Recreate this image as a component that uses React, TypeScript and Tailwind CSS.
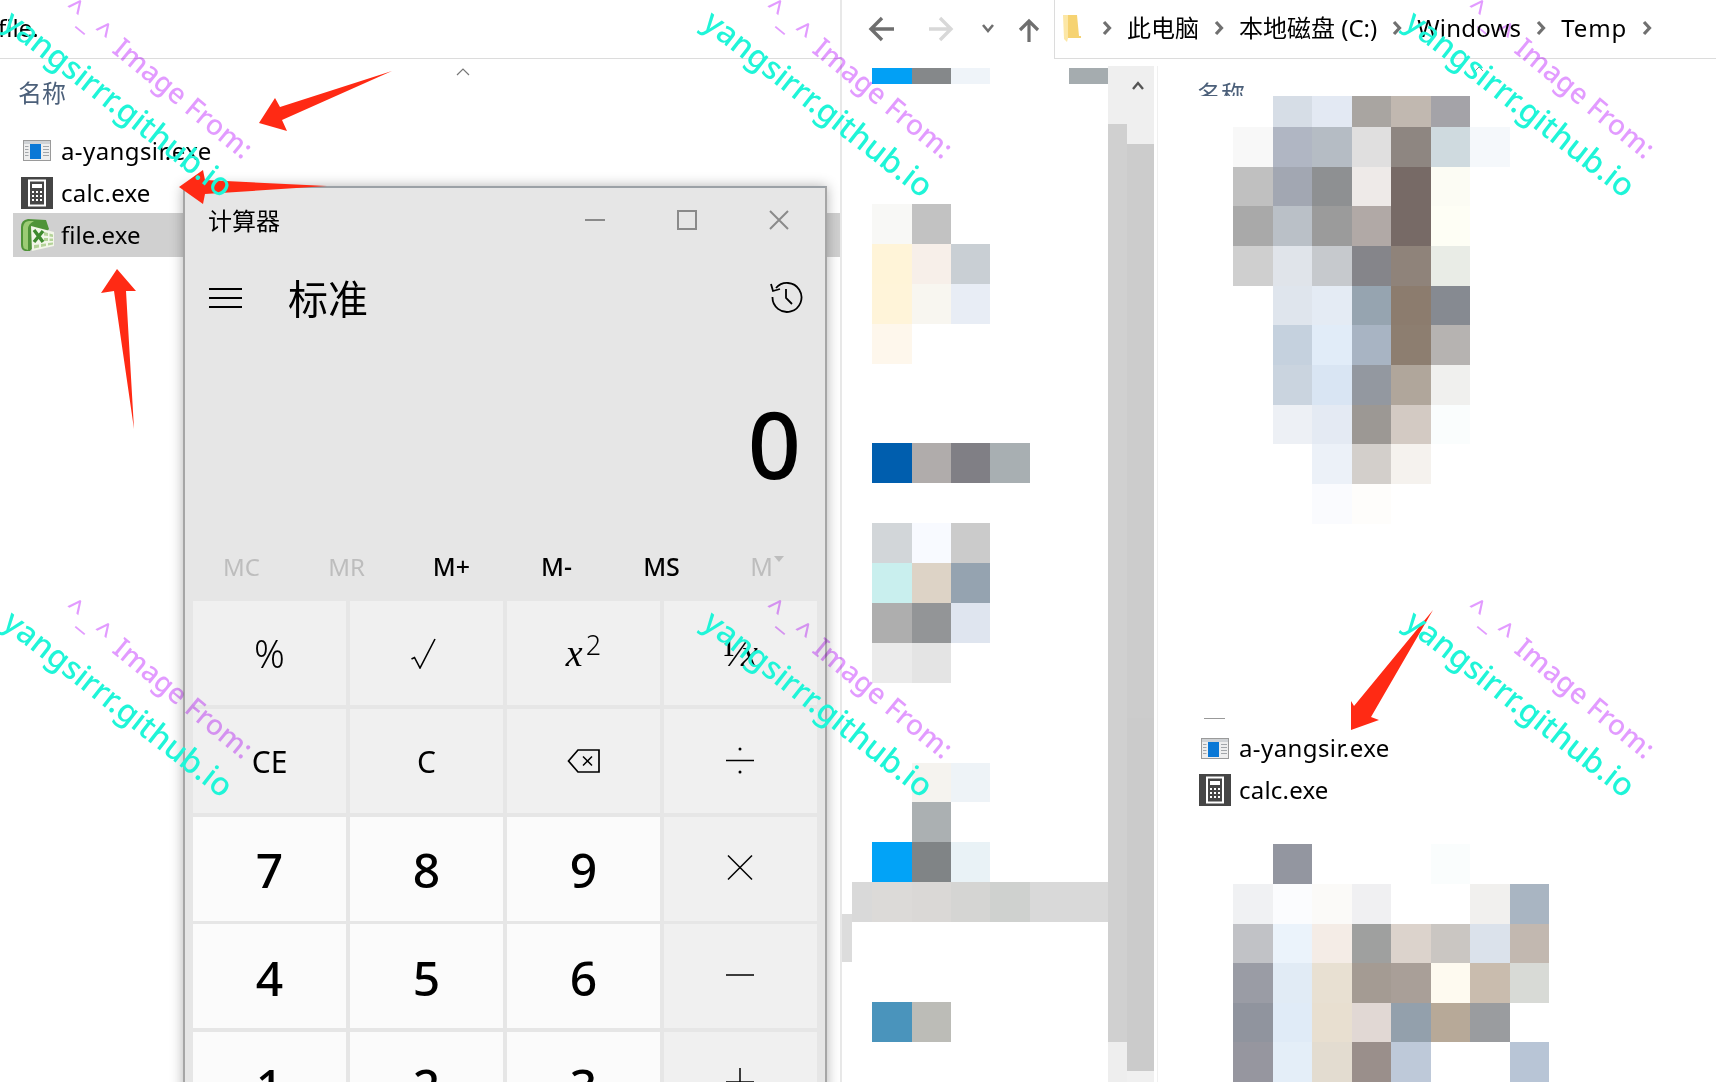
import React from "react";

const FONT = "font-['Noto_Sans','Noto_Sans_CJK_SC',sans-serif]";

type Band = { y: number; h: number; c: string[] };

function Mosaic({ x, w, h, pitch, bands, className }: { x: number; w: number; h: number; pitch: number; bands: Band[]; className?: string }) {
  return (
    <svg width={w} height={h} viewBox={`0 0 ${w} ${h}`} className={className} shapeRendering="crispEdges">
      {bands.map((b, i) =>
        b.c.map((col, j) =>
          col ? <rect key={`${i}-${j}`} x={x + j * pitch} y={b.y} width={pitch} height={b.h} fill={col} /> : null
        )
      )}
    </svg>
  );
}

const treeBands: Band[] = [
  { y: 2, h: 16, c: ["#02a0f5", "#85888a", "#eff4f9", "", "", "#a5acaf"] },
  { y: 138, h: 40, c: ["#f8f8f6", "#c2c2c2"] },
  { y: 178, h: 40, c: ["#fff4d8", "#f7efe9", "#c9cfd4"] },
  { y: 218, h: 40, c: ["#fff4d9", "#f8f6f0", "#e8edf5"] },
  { y: 258, h: 40, c: ["#fef7ec"] },
  { y: 377, h: 40, c: ["#005eae", "#b0acab", "#807f85", "#a8afb2"] },
  { y: 457, h: 40, c: ["#d2d6d9", "#f8faff", "#cbcbcb"] },
  { y: 497, h: 40, c: ["#c9efee", "#ddd3c6", "#95a3b0"] },
  { y: 537, h: 40, c: ["#aeaeae", "#939597", "#dfe5ef"] },
  { y: 577, h: 40, c: ["#ebebeb", "#e4e4e4"] },
  { y: 697, h: 39, c: ["", "#f5f3ef", "#eef3f7"] },
  { y: 736, h: 40, c: ["", "#abb0b2"] },
  { y: 776, h: 40, c: ["#02a3f7", "#808486", "#e9f2f6"] },
];

const topBands: Band[] = [
  { y: 0, h: 31, c: ["", "#d6dde6", "#e3e9f3", "#a9a5a1", "#c1b8b0", "#a4a3a8"] },
  { y: 31, h: 40, c: ["#f8f8f8", "#b0b6c3", "#b5bcc4", "#e0dfdf", "#8e8681", "#cfdadf", "#f5f8fb"] },
  { y: 71, h: 39, c: ["#c0c0c0", "#a2a7b2", "#8e9092", "#eeeae8", "#776a66", "#fcfcf4"] },
  { y: 110, h: 40, c: ["#a9a9a9", "#bac0c7", "#9b9b9b", "#b1a9a6", "#776a66", "#fefef5"] },
  { y: 150, h: 40, c: ["#cfcfcf", "#e0e4ea", "#c6c9cd", "#85858a", "#8f837a", "#e9ece6"] },
  { y: 190, h: 39, c: ["", "#dfe5ed", "#e4ebf4", "#96a4b0", "#8c7c6e", "#868a91"] },
  { y: 229, h: 40, c: ["", "#c5d1de", "#e1ecf8", "#a8b4c3", "#8d7e70", "#b6b3b1"] },
  { y: 269, h: 40, c: ["", "#cad4df", "#d9e5f3", "#9398a0", "#b0a69b", "#f0f0ee"] },
  { y: 309, h: 39, c: ["", "#edf0f5", "#e4eaf3", "#9c9894", "#d3cac3", "#fafdfd"] },
  { y: 348, h: 40, c: ["", "", "#ecf1f8", "#d3cfcb", "#f5f2ee"] },
  { y: 388, h: 40, c: ["", "", "#fafbfe", "#fefdfb"] },
];

const bottomBands: Band[] = [
  { y: 0, h: 40, c: ["", "#9396a0", "", "", "", "#fafdfd"] },
  { y: 40, h: 40, c: ["#f0f1f3", "#fbfcfe", "#fbfaf8", "#f0f0f2", "", "", "#f1f0ee", "#a9b5c2"] },
  { y: 80, h: 39, c: ["#c1c2c6", "#ebf3fb", "#f4ece6", "#9fa09f", "#dcd3cc", "#cac6c2", "#dbe2eb", "#c2b8b0"] },
  { y: 119, h: 40, c: ["#9a9ca5", "#e1ebf5", "#e8e0d2", "#a49b93", "#a99f98", "#fefaf0", "#c9bcae", "#d8dad6"] },
  { y: 159, h: 39, c: ["#90949e", "#e0ebf7", "#e8dfd0", "#e1d8d4", "#93a0ac", "#b7a998", "#9a9c9f"] },
  { y: 198, h: 40, c: ["#96969f", "#e4eef8", "#e3dcd0", "#9a8f8b", "#bec9d9", "", "", "#b8c5d6"] },
];

function AppIcon() {
  return (
    <svg width="28" height="21" viewBox="0 0 28 21" className="shrink-0">
      <rect x="0.5" y="0.5" width="27" height="20" fill="#eeeeee" stroke="#9a9a9a" />
      <rect x="1" y="1" width="26" height="3" fill="#cfd2d5" />
      <rect x="7" y="4" width="11" height="15" fill="#0a78d6" />
      <path d="M2 6.5h3.5M2 9.5h3.5M2 12.5h3.5M2 15.5h3.5M20 6.5h6M20 9.5h6M20 12.5h6M20 15.5h6" stroke="#a2a6aa" strokeWidth="1" />
    </svg>
  );
}

function CalcIcon() {
  return (
    <svg width="32" height="32" viewBox="0 0 32 32" className="shrink-0">
      <rect width="32" height="32" fill="#454545" />
      <rect x="8" y="3.5" width="16" height="25" fill="#454545" stroke="#fff" strokeWidth="2" />
      <rect x="11" y="7" width="10" height="4" fill="#fff" />
      <path d="M11 14h2v2h-2zM15 14h2v2h-2zM19 14h2v2h-2zM11 18h2v2h-2zM15 18h2v2h-2zM19 18h2v2h-2zM11 22h2v2h-2zM15 22h2v2h-2zM19 22h2v2h-2z" fill="#fff" />
    </svg>
  );
}

function ExcelIcon() {
  return (
    <svg width="33" height="33" viewBox="0 0 33 33" className="shrink-0">
      <path d="M0 8 Q0 1 7 0 L25 1 L28 10 L9 32 L4 32 Q0 31 0 26 Z" fill="#4f9338" />
      <path d="M2 8 Q3 2 8 2 L13 2 Q7 5 7 10 L7 31 L4 30 Q2 29 2 26 Z" fill="#9ccb75" />
      <path d="M10 7 L33 13 L33 27 L11 32 Z" fill="#f2f6e8" />
      <path d="M23 13 L27 14 L27 17 L23 16.5 Z M28.5 14.5 L32 15.5 L32 18 L28.5 17.5 Z M23 19 L27 19 L27 22 L23 22 Z M28.5 19.5 L32 19.5 L32 22 L28.5 22 Z M13 26 L18 25.5 L18 28.5 L13 29.5 Z M20 25 L25 24.5 L25 27 L20 28 Z M27 24 L32 23.5 L32 25.5 L27 26.5 Z" fill="#b4d399" />
      <path d="M13 11 L22 23 M22 12 L13 23" stroke="#3d8a2d" strokeWidth="3.4" />
    </svg>
  );
}

function FileRow({ icon, name, className, nameClass }: { icon: React.ReactNode; name: string; className?: string; nameClass?: string }) {
  return (
    <div className={`flex items-center text-[24px] leading-none text-black ${className ?? ""}`}>
      <span className="flex w-[32px] justify-center">{icon}</span>
      <span className={`ml-[8px] ${nameClass ?? ""}`}>{name}</span>
    </div>
  );
}

function Chevron() {
  return (
    <svg width="12" height="16" viewBox="0 0 12 16" className="shrink-0">
      <path d="M3 2 L8.5 8 L3 14" fill="none" stroke="#707070" strokeWidth="3.2" />
    </svg>
  );
}

function Crumb({ children, className }: { children?: React.ReactNode; className?: string }) {
  return (
    <>
      <span className={`text-[24px] leading-none text-black ${className ?? ""}`}>{children}</span>
      <Chevron />
    </>
  );
}

function CalcBtn({ light, children }: { light?: boolean; children: React.ReactNode }) {
  return (
    <div className={`flex h-[104px] items-center justify-center overflow-hidden text-black ${light ? "bg-[#fbfbfb]" : "bg-[#f0f0f0]"}`}>
      {children}
    </div>
  );
}

function Digit({ v }: { v: string }) {
  return (
    <CalcBtn light>
      <span className="pt-[3px] text-[48px] font-medium leading-none">{v}</span>
    </CalcBtn>
  );
}

function Op({ d, dots }: { d: string; dots?: boolean }) {
  return (
    <CalcBtn>
      <svg width="32" height="32" viewBox="0 0 32 32" fill="none" stroke="#000" strokeWidth="1.5" className="mr-[2px]">
        <path d={d} />
        {dots ? (
          <>
            <circle cx="16" cy="4" r="1.5" fill="#000" stroke="none" />
            <circle cx="16" cy="27" r="1.5" fill="#000" stroke="none" />
          </>
        ) : null}
      </svg>
    </CalcBtn>
  );
}

function Calculator() {
  return (
    <div className="absolute left-[183px] top-[186px] flex h-[1000px] w-[644px] flex-col border-x-2 border-t-2 border-x-[#a6a6a6] border-t-[#9ba1a6] bg-[#e6e6e6] shadow-[0_0_12px_rgba(0,0,0,0.3)]">
      <div className="flex h-[64px] shrink-0 items-center pl-[23px] pr-[36px]">
        <span className="pt-[1px] text-[24px] leading-none text-black">计算器</span>
        <div className="ml-auto flex items-center gap-[72px] pb-[1px] text-[#8a8a8a]">
          <svg width="20" height="20" viewBox="0 0 20 20" stroke="currentColor" strokeWidth="2" fill="none">
            <path d="M0 10h20" />
          </svg>
          <svg width="20" height="20" viewBox="0 0 20 20" stroke="currentColor" strokeWidth="2" fill="none">
            <rect x="1" y="1" width="18" height="18" />
          </svg>
          <svg width="20" height="20" viewBox="0 0 20 20" stroke="currentColor" strokeWidth="2" fill="none">
            <path d="M1 1 L19 19 M19 1 L1 19" />
          </svg>
        </div>
      </div>
      <div className="flex h-[92px] shrink-0 items-center pl-[24px] pr-[21px]">
        <svg width="33" height="20" viewBox="0 0 33 20" stroke="#000" strokeWidth="2">
          <path d="M0 1h33M0 10h33M0 19h33" />
        </svg>
        <span className="ml-[46px] pt-[2px] text-[40px] leading-none text-black">标准</span>
        <svg width="34" height="34" viewBox="0 0 34 34" fill="none" stroke="#000" strokeWidth="1.8" className="mb-[2px] ml-auto">
          <path d="M6 8 A14.5 14.5 0 1 1 2.5 17" />
          <path d="M1 4 L3 11 L10 9" />
          <path d="M16 9 V18 L22 24" />
        </svg>
      </div>
      <div className="flex h-[190px] shrink-0 items-center justify-end pr-[24px] pt-[9px]">
        <span className="text-[93px] font-medium leading-none text-black">0</span>
      </div>
      <div className="grid h-[67px] shrink-0 grid-cols-6 items-center pb-[2px] pl-[4px] pr-[6px] text-center text-[25px] leading-none">
        <span className="text-[24px] text-[#bdbdbd]">MC</span>
        <span className="text-[24px] text-[#bdbdbd]">MR</span>
        <span className="font-medium text-black">M+</span>
        <span className="font-medium text-black">M-</span>
        <span className="font-medium text-black">MS</span>
        <span className="relative pr-[10px] text-[#bdbdbd]">
          M
          <svg width="10" height="6" viewBox="0 0 10 6" className="absolute left-[60px] top-[2px]">
            <path d="M0 0h10L5 6z" fill="#bdbdbd" />
          </svg>
        </span>
      </div>
      <div className="grid grid-cols-4 gap-x-[4px] gap-y-[3.75px] px-[8px]">
        <CalcBtn><span className="text-[38px] font-light leading-none">%</span></CalcBtn>
        <CalcBtn>
          <svg width="25" height="31" viewBox="0 0 25 31" fill="none" stroke="#000" strokeWidth="1.6" className="mr-[6px]">
            <path d="M0.5 21 L3.5 19.5 L9 30 L24 1" />
          </svg>
        </CalcBtn>
        <CalcBtn>
          <span className="font-['Liberation_Serif'] text-[38px] italic leading-none">x</span>
          <span className="mb-[18px] ml-[3px] text-[27px] font-light leading-none">2</span>
        </CalcBtn>
        <CalcBtn>
          <span className="font-['Liberation_Serif'] text-[38px] leading-none">¹⁄<i>x</i></span>
        </CalcBtn>
        <CalcBtn><span className="pt-[2px] text-[30px] leading-none">CE</span></CalcBtn>
        <CalcBtn><span className="pt-[2px] text-[30px] leading-none">C</span></CalcBtn>
        <CalcBtn>
          <svg width="34" height="26" viewBox="0 0 34 26" fill="none" stroke="#000" strokeWidth="1.7">
            <path d="M1.5 13 L11 2 H32 V24 H11 Z" />
            <path d="M16 8.5 L25 17.5 M25 8.5 L16 17.5" strokeWidth="1.5" />
          </svg>
        </CalcBtn>
        <Op d="M2 15.5h28" dots />
        <Digit v="7" />
        <Digit v="8" />
        <Digit v="9" />
        <Op d="M4 2.5 L28 26.5 M28 2.5 L4 26.5" />
        <Digit v="4" />
        <Digit v="5" />
        <Digit v="6" />
        <Op d="M2 15h28" />
        <Digit v="1" />
        <Digit v="2" />
        <Digit v="3" />
        <Op d="M2 14h28 M16 0v28" />
      </div>
    </div>
  );
}

function Watermark({ className }: { className: string }) {
  return (
    <div className={`pointer-events-none absolute h-0 w-0 ${className}`}>
      <span className="absolute left-[78px] top-[-8px] origin-top-left rotate-[39.5deg] whitespace-pre text-[28px] font-medium leading-none text-[#e29bff] mix-blend-multiply">
        <span className="tracking-[4px]">{"^_^"}</span>
        {" Image From:"}
      </span>
      <span className="absolute left-[18px] top-[4px] origin-top-left rotate-[38deg] whitespace-pre text-[32px] font-medium leading-none text-[#1ff5d8]">
        yangsirrr.github.io
      </span>
    </div>
  );
}

function Arrows() {
  return (
    <svg width="1716" height="1082" viewBox="0 0 1716 1082" className="pointer-events-none absolute left-0 top-0" fill="#ff2a14">
      <path d="M392 71 L280 107 L275 98 L259 123 L287 131 L282 120 Z" />
      <path d="M327 186 L205 180 L203 170 L179 187 L203 204 L205 194 Z" />
      <path d="M134 429 L126 291 L136 291 L117 269 L101 293 L114 291 Z" />
      <path d="M1433 610 L1354 706 L1351 701 L1351 730 L1379 720 L1371 717 Z" />
    </svg>
  );
}

export default function App() {
  return (
    <div className={`relative flex h-[1082px] w-[1716px] overflow-hidden bg-white ${FONT}`}>
      {/* left explorer */}
      <div className="flex h-full w-[840px] shrink-0 flex-col">
        <div className="flex h-[59px] shrink-0 items-center border-b border-[#dcdcdc] pb-[2px] text-[24px] leading-none text-black">
          <span className="-ml-[2px]">file.</span>
        </div>
        <div className="relative h-[63px] shrink-0 pl-[18px] pt-[22px] text-[24px] leading-none text-[#4c607a]">
          名称
          <svg width="16" height="9" viewBox="0 0 16 9" className="absolute left-[455px] top-[8px]" fill="none" stroke="#777" strokeWidth="1.2">
            <path d="M2 8 L8 2 L14 8" />
          </svg>
        </div>
        <FileRow icon={<AppIcon />} name="a-yangsir.exe" nameClass="tracking-[0.4px]" className="h-[48px] pb-[4px] pl-[21px] pt-[13px]" />
        <FileRow icon={<CalcIcon />} name="calc.exe" nameClass="tracking-[0.2px]" className="h-[38px] pl-[21px] pt-[7px]" />
        <FileRow icon={<ExcelIcon />} name="file.exe" className="ml-[13px] mt-[5px] h-[44px] bg-[#d0d0d0] pl-[8px]" />
      </div>

      {/* separator */}
      <div className="h-full w-[2px] shrink-0 bg-[#e8e8e8]" />

      {/* right explorer */}
      <div className="flex h-full min-w-0 flex-1 flex-col">
        <div className="flex h-[59px] shrink-0">
          <div className="relative w-[212px] shrink-0">
            <svg width="212" height="59" viewBox="0 0 212 59" fill="none" className="absolute left-0 top-0">
              <path d="M30 29 H52 M40 18 L29 29 L40 40" stroke="#6f6f6f" strokeWidth="3.4" />
              <path d="M87 29 H108 M98 18 L109 29 L98 40" stroke="#d8d8d8" strokeWidth="3.4" />
              <path d="M141 25 L146 31 L151 25" stroke="#6f6f6f" strokeWidth="2.6" />
              <path d="M187 42 V21 M178 30 L187 21 L196 30" stroke="#6f6f6f" strokeWidth="3.2" />
            </svg>
          </div>
          <div className="flex min-w-0 flex-1 items-center gap-[14px] whitespace-nowrap border-b border-l border-[#dcdcdc] pb-[2px] pl-[8px]">
            <svg width="18" height="28" viewBox="0 0 18 28" className="mr-[6px] shrink-0">
              <path d="M1 1 H14 L16 22 H18 V24 H4 Z" fill="#f6d372" />
              <path d="M0 1 L5 1 L5 24 L4 28 L1 25 Z" fill="#fce7a6" />
            </svg>
            <Chevron />
            <Crumb>此电脑</Crumb>
            <Crumb>本地磁盘 (C:)</Crumb>
            <Crumb className="tracking-[0.2px]">Windows</Crumb>
            <Crumb className="tracking-[0.9px]">Temp</Crumb>
          </div>
        </div>

        <div className="flex min-h-0 flex-1 pt-[7px]">
          {/* tree */}
          <div className="relative w-[266px] shrink-0">
            <Mosaic x={30.4} w={266} h={1016} pitch={39.3} bands={treeBands} className="absolute left-0 top-0" />
            <div className="absolute left-[10px] top-[816px] h-[40px] w-[256px] bg-[#d9d9d9]">
              <Mosaic x={20.4} w={256} h={40} pitch={39.3} bands={[{ y: 0, h: 40, c: ["#dcdad8", "#dad8d6", "#d5d5d3", "#cfd1cf"] }]} />
            </div>
            <div className="absolute left-0 top-[848px] h-[48px] w-[10px] bg-[#dcdcdc]" />
            <div className="absolute left-[30.4px] top-[936px] flex">
              <div className="h-[40px] w-[39.3px] bg-[#4a94bc]" />
              <div className="h-[40px] w-[39.3px] bg-[#bcbcb7]" />
            </div>
          </div>
          {/* scrollbar */}
          <div className="relative flex w-[46px] shrink-0">
            <div className="flex w-[19px] flex-col">
              <div className="h-[58px] bg-[#efefef]" />
              <div className="h-[918px] bg-[#d0d0d0]" />
              <div className="flex-1 bg-[#eeeeee]" />
            </div>
            <div className="flex w-[27px] flex-col">
              <div className="h-[78px] bg-[#efefef]" />
              <div className="h-[574px] bg-[#cccccc]" />
              <div className="h-[353px] bg-[#cbcbcb]" />
              <div className="flex-1 bg-[#f0f0f0]" />
            </div>
            <svg width="14" height="10" viewBox="0 0 14 10" fill="none" stroke="#555" strokeWidth="2.4" className="absolute left-[23px] top-[14px]">
              <path d="M2 9 L7 3 L12 9" />
            </svg>
          </div>
          <div className="ml-[3px] h-full w-[1px] shrink-0 bg-[#f0f0f0]" />
          {/* content */}
          <div className="relative flex min-w-0 flex-1 flex-col pl-[39px]">
            <div className="h-[30px] shrink-0 overflow-hidden pt-[16px] text-[24px] leading-none text-[#4c607a]">
              <span className="block">名称</span>
            </div>
            <svg width="10" height="6" viewBox="0 0 10 6" fill="none" stroke="#888" strokeWidth="1" className="absolute left-[316px] top-0">
              <path d="M1 5 L5 1 L9 5" />
            </svg>
            <Mosaic x={36} w={320} h={428} pitch={39.5} bands={topBands} className="shrink-0" />
            <div className="ml-[7px] mt-[194px] h-[1px] w-[21px] shrink-0 bg-[#999999]" />
            <FileRow icon={<AppIcon />} name="a-yangsir.exe" nameClass="tracking-[0.4px]" className="mt-[15px] h-[30px] pl-[2px]" />
            <FileRow icon={<CalcIcon />} name="calc.exe" nameClass="tracking-[0.2px]" className="mt-[12px] h-[32px] pl-[2px]" />
            <Mosaic x={36} w={360} h={238} pitch={39.5} bands={bottomBands} className="mt-[38px] shrink-0" />
          </div>
        </div>
      </div>

      <Calculator />
      <Arrows />
      <Watermark className="left-0 top-0" />
      <Watermark className="left-[700px] top-0" />
      <Watermark className="left-[1402px] top-0" />
      <Watermark className="left-0 top-[600px]" />
      <Watermark className="left-[700px] top-[600px]" />
      <Watermark className="left-[1402px] top-[600px]" />
    </div>
  );
}
